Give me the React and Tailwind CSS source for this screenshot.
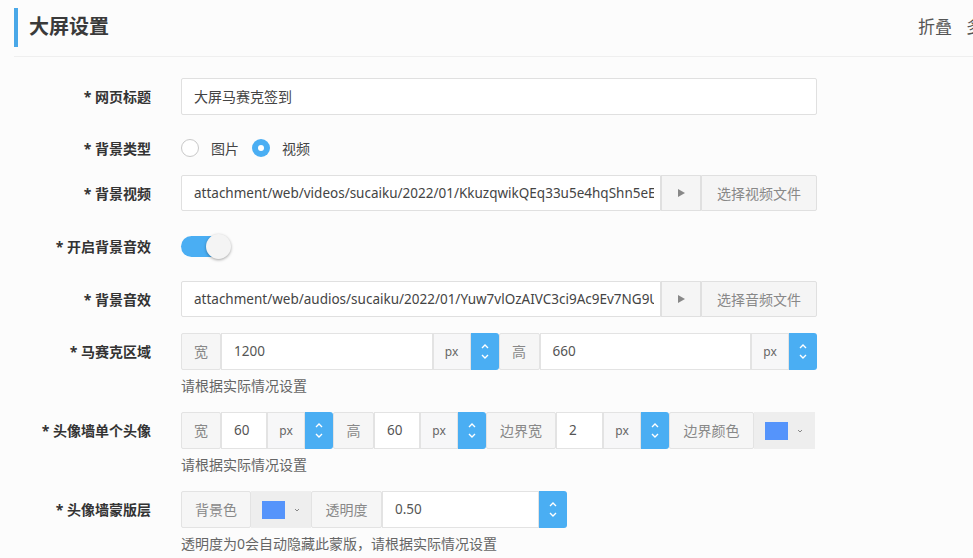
import React, { useState } from "react";

const CJK = { fontFamily: '"Noto Sans", "Noto Sans CJK SC", sans-serif' };

// small blue up/down spinner used next to number inputs
const Spinner = () => (
  <div className="w-[28px] h-full bg-[#4aaef3] rounded-r-[3px] flex flex-col items-center justify-center gap-[5px] shrink-0">
    <svg width="8" height="5" viewBox="0 0 8 5">
      <path d="M1 4 L4 1 L7 4" stroke="white" strokeWidth="1.4" fill="none" />
    </svg>
    <svg width="8" height="5" viewBox="0 0 8 5">
      <path d="M1 1 L4 4 L7 1" stroke="white" strokeWidth="1.4" fill="none" />
    </svg>
  </div>
);

const Addon = ({ children, w }) => (
  <div
    className={`${w} h-full shrink-0 bg-[#f6f6f6] border border-[#e3e3e3] rounded-[2px] flex items-center justify-center text-[14px] text-[#888]`}
  >
    {children}
  </div>
);

const Px = () => (
  <div className="w-[38px] h-full shrink-0 bg-[#f7f7f8] border border-[#e3e3e3] flex items-center justify-center text-[12px] text-[#666]">
    px
  </div>
);

const NumInput = ({ value, w }) => (
  <div
    className={`${w} h-full bg-white border border-[#e3e3e3] flex items-center pl-[12px] text-[13.5px] text-[#555]`}
  >
    {value}
  </div>
);

const ColorPick = ({ w }) => (
  <div className={`${w} h-full shrink-0 bg-[#eeeeee] flex items-center pl-[11px] gap-[9px]`}>
    <div className="w-[23px] h-[18px] bg-[#5594fb]" />
    <svg width="6" height="4" viewBox="0 0 6 4">
      <path d="M1 1 L3 3 L5 1" stroke="#888" strokeWidth="1" fill="none" />
    </svg>
  </div>
);

const Row = ({ label, children, h = "h-[36px]", mt }) => (
  <div className={`flex ${mt}`}>
    <div className={`w-[137px] ${h} flex items-center justify-end text-[14px] font-bold text-[#333] shrink-0 whitespace-nowrap`}>
      * {label}
    </div>
    <div className="ml-[30px] w-[636px] shrink-0">{children}</div>
  </div>
);

const Help = ({ children }) => (
  <div className="mt-[6px] h-[20px] leading-[20px] text-[14px] text-[#666]">{children}</div>
);

const FileRow = ({ path, btn }) => (
  <div className="h-[36px] flex">
    <div className="w-[480px] shrink-0 h-full bg-white border border-[#e0e0e0] rounded-l-[2px] flex items-center pl-[12px] pr-[6px] overflow-hidden whitespace-nowrap text-[13.5px] text-[#444]">
      <span className="overflow-hidden">{path}</span>
    </div>
    <div className="w-[40px] shrink-0 h-full bg-[#f5f5f5] border border-[#e0e0e0] flex items-center justify-center">
      <svg width="7" height="8" viewBox="0 0 7 8">
        <path d="M0 0 L7 4 L0 8 Z" fill="#888" />
      </svg>
    </div>
    <div className="flex-1 h-full bg-[#f5f5f5] border border-[#e0e0e0] rounded-r-[2px] flex items-center justify-center text-[14px] text-[#888]">
      {btn}
    </div>
  </div>
);

export default function App() {
  const [audio, setAudio] = useState(true);

  return (
    <div className="w-[973px] h-[558px] overflow-hidden bg-[#fcfcfc] pl-[14px]" style={CJK}>
      {/* header */}
      <div className="h-[57px] border-b border-[#efefef] flex items-center">
        <div className="w-[4px] h-[39px] bg-[#4aa8e8] -mt-[1px]" />
        <div className="ml-[11px] text-[20px] font-bold text-[#3a3a3a] -mt-[3px]">大屏设置</div>
        <div className="ml-auto w-[59px] -mr-[4px] shrink-0 text-[17px] text-[#555] whitespace-nowrap -mt-[3px]">
          折叠<span className="ml-[14px]">多</span>
        </div>
      </div>

      <div className="flex flex-col">
        <Row label="网页标题" h="h-[37px]" mt="mt-[21px]">
          <div className="h-[37px] bg-white border border-[#e0e0e0] rounded-[2px] flex items-center pl-[12px] text-[14px] text-[#444]">
            大屏马赛克签到
          </div>
        </Row>

        <Row label="背景类型" mt="mt-[15px]">
          <div className="h-[36px] flex items-center text-[14px] text-[#444]">
            <div className="w-[18px] h-[18px] rounded-full border-[1.5px] border-[#c9c9c9] bg-white" />
            <span className="ml-[12px]">图片</span>
            <div className="ml-[13px] w-[18px] h-[18px] rounded-full bg-[#4aaef3] flex items-center justify-center">
              <div className="w-[6px] h-[6px] rounded-full bg-white" />
            </div>
            <span className="ml-[12px]">视频</span>
          </div>
        </Row>

        <Row label="背景视频" mt="mt-[9px]">
          <FileRow
            path="attachment/web/videos/sucaiku/2022/01/KkuzqwikQEq33u5e4hqShn5eE1vwP8.mp4"
            btn="选择视频文件"
          />
        </Row>

        <Row label="开启背景音效" h="h-[34px]" mt="mt-[18px]">
          <div className="h-[34px] flex items-center">
            <button
              onClick={() => setAudio(!audio)}
              className={`relative w-[48px] h-[21px] rounded-full ${audio ? "bg-[#4aaef3]" : "bg-[#ddd]"}`}
            >
              <span
                className={`absolute top-[-2px] ${audio ? "left-[25px]" : "left-0"} w-[25px] h-[25px] rounded-full bg-[#f4f4f4] shadow-[0_1px_3px_rgba(0,0,0,0.35)]`}
              />
            </button>
          </div>
        </Row>

        <Row label="背景音效" mt="mt-[18px]">
          <FileRow
            path="attachment/web/audios/sucaiku/2022/01/Yuw7vlOzAIVC3ci9Ac9Ev7NG9UxQ2.mp3"
            btn="选择音频文件"
          />
        </Row>

        <Row label="马赛克区域" h="h-[37px]" mt="mt-[16px]">
          <div className="h-[37px] flex">
            <Addon w="w-[40px]">宽</Addon>
            <NumInput value="1200" w="flex-1" />
            <Px />
            <Spinner />
            <Addon w="w-[41px]">高</Addon>
            <NumInput value="660" w="flex-1" />
            <Px />
            <Spinner />
          </div>
          <Help>请根据实际情况设置</Help>
        </Row>

        <Row label="头像墙单个头像" h="h-[37px]" mt="mt-[16px]">
          <div className="h-[37px] flex">
            <Addon w="w-[40px]">宽</Addon>
            <NumInput value="60" w="w-[46px]" />
            <Px />
            <Spinner />
            <Addon w="w-[41px]">高</Addon>
            <NumInput value="60" w="w-[46px]" />
            <Px />
            <Spinner />
            <Addon w="w-[70px]">边界宽</Addon>
            <NumInput value="2" w="w-[47px]" />
            <Px />
            <Spinner />
            <Addon w="w-[85px]">边界颜色</Addon>
            <ColorPick w="w-[61px]" />
          </div>
          <Help>请根据实际情况设置</Help>
        </Row>

        <Row label="头像墙蒙版层" h="h-[37px]" mt="mt-[16px]">
          <div className="h-[37px] flex">
            <Addon w="w-[70px]">背景色</Addon>
            <ColorPick w="w-[60px]" />
            <Addon w="w-[71px]">透明度</Addon>
            <NumInput value="0.50" w="w-[157px]" />
            <Spinner />
          </div>
          <Help>透明度为0会自动隐藏此蒙版，请根据实际情况设置</Help>
        </Row>
      </div>
    </div>
  );
}
